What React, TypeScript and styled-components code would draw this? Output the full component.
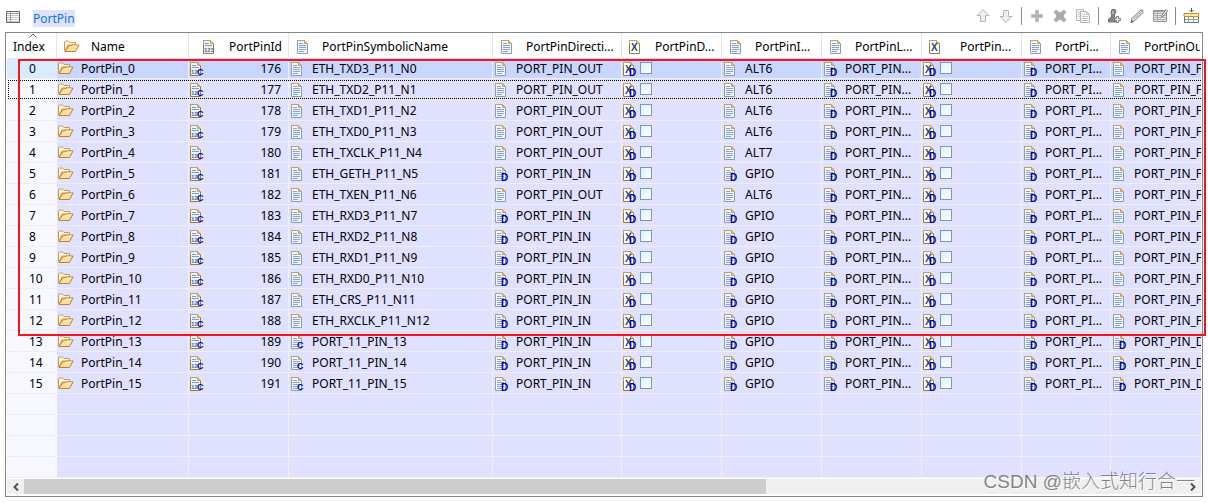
import React from "react";
import styled, { createGlobalStyle, css } from "styled-components";

const GlobalStyle = createGlobalStyle`
  *, *::before, *::after { box-sizing: border-box; }
  body {
    margin: 0;
    background: #fff;
    color: #000;
    font: 12px/16px "Noto Sans", "Noto Sans CJK SC", sans-serif;
  }
`;

const Page = styled.main`
  padding: 0 5px 5px;
`;

const TitleBar = styled.header`
  display: flex;
  align-items: center;
  justify-content: space-between;
  height: 32px;
  padding-right: 4px;
`;

const Title = styled.div`
  display: flex;
  align-items: center;
  gap: 12px;
  padding-top: 4px;
`;

const TitleLink = styled.a`
  padding-top: 1px;
  background: #e0e0ff;
  color: #0a78d6;
  text-decoration: none;
`;

const Toolbar = styled.div`
  display: flex;
  align-items: center;
  gap: 7px;
`;

const ToolButton = styled.button`
  display: block;
  width: 16px;
  height: 16px;
  padding: 0;
  border: 0;
  background: none;
`;

const Separator = styled.span`
  width: 1px;
  height: 18px;
  background: #8c8c8c;
`;

const Frame = styled.section`
  position: relative;
  border: 1px solid #828790;
  padding: 0 1px;
`;

const Viewport = styled.div`
  overflow: hidden;
`;

const Grid = styled.table`
  width: 100%;
  table-layout: fixed;
  border-collapse: separate;
  border-spacing: 0;
`;

const Col = styled.col<{ $width?: number }>`
  ${(p) => p.$width && `width: ${p.$width}px;`}
`;

const HeadCell = styled.th<{ $last?: boolean }>`
  height: 25px;
  padding: 0;
  overflow: hidden;
  border-right: 1px solid ${(p) => (p.$last ? "transparent" : "#e5e5e5")};
  font-weight: 400;
  text-align: left;
  white-space: nowrap;
`;

const HeadContent = styled.div<{ $gap: number; $end?: boolean }>`
  display: flex;
  align-items: center;
  gap: ${(p) => p.$gap}px;
  padding: 1px 6px 0 7px;
  ${(p) => p.$end && "justify-content: flex-end;"}
`;

const IndexHead = styled.div`
  position: relative;
  padding: 3px 4px 0 6px;
`;

const SortMark = styled.svg`
  position: absolute;
  top: -3px;
  left: 22px;
`;

const Row = styled.tr<{ $selected?: boolean; $focused?: boolean }>`
  --index: ${(p) => (p.$selected ? "#d9ebff" : "#f7f7ff")};
  --cell: ${(p) => (p.$selected ? "#c9d6ff" : "#e0e0ff")};
  ${(p) =>
    p.$focused &&
    css`
      position: relative;
      td:first-child::after {
        content: "";
        position: absolute;
        inset: 1px 0 1px 1px;
        border: 1px dotted #000;
        border-right: 0;
        pointer-events: none;
      }
    `}
`;

const Cell = styled.td<{ $last?: boolean }>`
  height: 21px;
  padding: 0 0 0 1px;
  overflow: hidden;
  background: var(--cell);
  border-bottom: 1px solid #efefef;
  border-right: ${(p) => (p.$last ? 0 : 1)}px solid #efefef;
  white-space: nowrap;
`;

const IndexCell = styled(Cell)`
  padding: 2px 0 0 22px;
  background: var(--index);
  border-right-color: var(--index);
`;

const CellContent = styled.div<{ $spread?: boolean; $gap?: number }>`
  display: flex;
  align-items: center;
  gap: ${(p) => p.$gap ?? 6}px;
  ${(p) => p.$spread && "justify-content: space-between; padding-right: 7px;"}
`;

const Label = styled.span`
  padding-top: 2px;
`;

const Glyph = styled.svg`
  display: block;
  flex: none;
  overflow: visible;
`;

const CheckBox = styled.input`
  appearance: none;
  width: 12px;
  height: 12px;
  margin: 0;
  border: 1px solid #8496ad;
  background: linear-gradient(135deg, #d8f2fc, #fff);
`;

const ScrollBar = styled.div`
  display: flex;
  align-items: stretch;
  height: 15px;
  margin: 1px 0 2px;
  background: #efefef;
`;

const ScrollButton = styled.button`
  display: flex;
  align-items: center;
  justify-content: center;
  width: 17px;
  padding: 0;
  border: 0;
  background: none;
`;

const Track = styled.div`
  flex: 1;
`;

const Thumb = styled.div`
  width: 64%;
  height: 100%;
  background: #cdcdcd;
`;

const Highlight = styled.div`
  position: absolute;
  top: 26px;
  left: 12px;
  right: -4px;
  height: 277px;
  border: 2px solid #f5141c;
  pointer-events: none;
`;

const Watermark = styled.div`
  position: absolute;
  right: 7px;
  bottom: 1px;
  color: rgba(100, 100, 105, 0.8);
  font: 19px/26px "Liberation Sans", "Noto Sans CJK SC", sans-serif;
  font-weight: 300;
  text-shadow: 1px 1px 0 rgba(255, 255, 255, 0.8);
  white-space: nowrap;
  pointer-events: none;
`;

type Kind = "doc" | "num" | "bool" | "folder";
type Badge = "C" | "D";

function KindIcon({ kind, badge }: { kind: Kind; badge?: Badge }) {
  if (kind === "folder") {
    return (
      <Glyph width="16" height="16" viewBox="0 0 16 16" aria-hidden="true">
        <path d="M.5 12.500v-8.500l1-1h3l1.500 1.500h5.500v2.500h-7.500L1 13z" fill="#fdf6dc" stroke="#cb9a52" strokeLinejoin="round" />
        <path d="M1 13.500 4.500 8h2.500l1-1h7L11.500 13.500z" fill="#fbdf9a" stroke="#bd7f30" strokeLinejoin="round" />
        <path d="M5.500 9h2l1-1h5" fill="none" stroke="#fff3c8" />
      </Glyph>
    );
  }
  const x = kind === "doc" ? 1 : 0;
  const edge = kind === "doc" ? "#8a9cba" : "#9c7b34";
  return (
    <Glyph width="16" height="16" viewBox="0 0 16 16" aria-hidden="true">
      <path
        d={`M${x + 0.5} 2.500h7l3 3v10h-10z`}
        fill={kind === "num" ? "#eaf2fb" : kind === "doc" ? "#f0f6fd" : "#fbfdff"}
        stroke={edge}
      />
      <path d={`M${x + 0.5} 6v-3.500h7`} fill="none" stroke="#b9a467" />
      <path d={`M${x + 7.5} 2.500v3h3z`} fill="#e6bd62" stroke="#caa552" />
      {kind === "doc" && (
        <path d={`M${x + 2} 5.500h4M${x + 2} 7.500h7M${x + 2} 9.500h7M${x + 2} 11.500h7M${x + 2} 13.500h5`} stroke="#8ba3cb" />
      )}
      {kind === "num" && (
        <>
          <path d="M2 5.500h4M2 7.500h7" stroke="#7f9cc6" />
          <text x="1" y="14" fontFamily="Liberation Sans" fontSize="6" fontWeight="700" fill="#4d6f9f">
            {badge ? "12" : "123"}
          </text>
        </>
      )}
      {kind === "bool" && (
        <text x="2" y="13" fontFamily="Liberation Sans" fontSize="10" fontWeight="700" fill="#24496c">X</text>
      )}
      {badge && (
        <text
          x={kind === "bool" ? 6 : 7}
          y={badge === "D" ? 16 : 15}
          fontFamily="Liberation Sans"
          fontSize={badge === "D" ? 10 : 9}
          fontWeight="700"
          fill="#00009c"
        >
          {badge}
        </text>
      )}
    </Glyph>
  );
}

type ToolName = "up" | "down" | "add" | "remove" | "copy" | "stamp" | "edit" | "editTable" | "insert";

const toolDrawings: Record<ToolName, React.ReactNode> = {
  up: <path d="M8 1.500 14 7.500h-3.500v6h-5v-6H2z" fill="#eeeeea" stroke="#b4b4b0" strokeLinejoin="round" />,
  down: <path d="M8 14.500 14 8.500h-3.500v-6h-5v6H2z" fill="#eeeeea" stroke="#b4b4b0" strokeLinejoin="round" />,
  add: <path d="M6.500 2.500h3v4h4v3h-4v4h-3v-4h-4v-3h4z" fill="#b3b6ad" stroke="#bfc1ba" />,
  remove: <path d="M2 4 4 2l4 3 4-3 2 2-3 4 3 4-2 2-4-3-4 3-2-2 3-4z" fill="#aaa" stroke="#b4b4b4" />,
  copy: (
    <>
      <path d="M1.500 1.500h7v11h-7z" fill="#f6f6f6" stroke="#b9b9b9" />
      <path d="M5.500 3.500h6l3 3v8h-9z" fill="#fafafa" stroke="#b4b4b4" />
      <path d="M11.500 3.500v3h3M7 6.500h3M7 8.500h6M7 10.500h6M7 12.500h6M3 4.500h2M3 6.500h2M3 8.500h2" fill="none" stroke="#c3c3c3" />
    </>
  ),
  stamp: (
    <>
      <path d="M5 3.500 6 1.500h3l1 2L8.500 7v2l1.500 2v3H2.500v-3l3-2V7z" fill="#858585" stroke="#747474" />
      <path d="M6 3h2v3H6z" fill="#b4b4b4" />
      <path d="M10.500 8.500h2v2h2v2h-2v2h-2v-2h-2v-2h2z" fill="#e9e9e9" stroke="#7d7d7d" />
    </>
  ),
  edit: (
    <>
      <path d="M2 14.500 3 10.500 11 2.500l2.500-.500.500 2.500-8 8z" fill="#dcdcdc" stroke="#7b7b7b" />
      <path d="M5 11 12 4" stroke="#b5b5b5" />
      <path d="M1.500 15 2.500 12l2 2z" fill="#666" />
    </>
  ),
  editTable: (
    <>
      <path d="M1.500 2.500h13v11h-13z" fill="#e6e1e8" stroke="#999" />
      <path d="M1 2h14v2H1z" fill="#999" />
      <path d="M2 5.500h12M2 7.500h12M2 9.500h12M2 11.500h12M5.500 4v9" stroke="#b4aeb6" />
      <path d="M9.500 9 10 7l4-5.500 1.500 1.500L11.500 8z" fill="#eee" stroke="#858585" />
    </>
  ),
  insert: (
    <>
      <path d="M1.500 5.500h14v9h-14z" fill="#f8fafc" stroke="#55738f" />
      <path d="M2 8.500h14M2 11.500h14M5.500 9v6M10.500 9v6" stroke="#8ba2b8" />
      <path d="M1 5.500h14.500v3H1z" fill="#ffe9a6" stroke="#d08c12" />
      <path d="M8.500 0v4M6.500 2 8.500 4l2-2" fill="none" stroke="#3d5a78" />
    </>
  ),
};

const toolGroups: { name: ToolName; label: string }[][] = [
  [
    { name: "up", label: "Move up" },
    { name: "down", label: "Move down" },
  ],
  [
    { name: "add", label: "Add" },
    { name: "remove", label: "Remove" },
    { name: "copy", label: "Duplicate" },
  ],
  [
    { name: "stamp", label: "Add reference" },
    { name: "edit", label: "Edit" },
    { name: "editTable", label: "Edit table" },
  ],
  [{ name: "insert", label: "Insert row" }],
];

interface Column {
  title: string;
  kind: Kind;
  width?: number;
  gap?: number;
  end?: boolean;
}

const columns: Column[] = [
  { title: "Name", kind: "folder", width: 132, gap: 11 },
  { title: "PortPinId", kind: "num", width: 100, end: true },
  { title: "PortPinSymbolicName", kind: "doc", width: 204 },
  { title: "PortPinDirecti...", kind: "doc", width: 129 },
  { title: "PortPinD...", kind: "bool", width: 100 },
  { title: "PortPinI...", kind: "doc", width: 100 },
  { title: "PortPinL...", kind: "doc", width: 100 },
  { title: "PortPin...", kind: "bool", width: 100, gap: 15 },
  { title: "PortPi...", kind: "doc", width: 89 },
  { title: "PortPinOutput", kind: "doc" },
];

const symbolicNames = [
  "ETH_TXD3_P11_N0",
  "ETH_TXD2_P11_N1",
  "ETH_TXD1_P11_N2",
  "ETH_TXD0_P11_N3",
  "ETH_TXCLK_P11_N4",
  "ETH_GETH_P11_N5",
  "ETH_TXEN_P11_N6",
  "ETH_RXD3_P11_N7",
  "ETH_RXD2_P11_N8",
  "ETH_RXD1_P11_N9",
  "ETH_RXD0_P11_N10",
  "ETH_CRS_P11_N11",
  "ETH_RXCLK_P11_N12",
  "PORT_11_PIN_13",
  "PORT_11_PIN_14",
  "PORT_11_PIN_15",
];

const pins = symbolicNames.map((symbol, index) => {
  const output = index < 5 || index === 6;
  return {
    index,
    symbol,
    id: 176 + index,
    output,
    mode: output ? (index === 4 ? "ALT7" : "ALT6") : "GPIO",
    custom: index < 13,
  };
});

function ValueCell({ text, badge, last }: { text: string; badge?: Badge; last?: boolean }) {
  return (
    <Cell $last={last}>
      <CellContent>
        <KindIcon kind="doc" badge={badge} />
        <Label>{text}</Label>
      </CellContent>
    </Cell>
  );
}

function FlagCell({ label }: { label: string }) {
  return (
    <Cell>
      <CellContent $gap={1}>
        <KindIcon kind="bool" badge="D" />
        <CheckBox type="checkbox" aria-label={label} />
      </CellContent>
    </Cell>
  );
}

export default function App() {
  return (
    <Page>
      <GlobalStyle />
      <TitleBar>
        <Title>
          <Glyph width="16" height="16" viewBox="0 0 16 16" aria-hidden="true">
            <path d="M1.500 1.500h13v11h-13z" fill="#fff" stroke="#666" />
            <path d="M2 3.500h12" stroke="#999" />
            <path d="M2 5.500h12M2 7.500h12M2 9.500h12M2 11.500h12" stroke="#c4c4c4" />
            <path d="M5.500 2v10" stroke="#999" />
          </Glyph>
          <TitleLink href="#portpin">PortPin</TitleLink>
        </Title>
        <Toolbar role="toolbar" aria-label="Table actions">
          {toolGroups.map((group, i) => (
            <React.Fragment key={i}>
              {i > 0 && <Separator />}
              {group.map((tool) => (
                <ToolButton key={tool.name} type="button" aria-label={tool.label}>
                  <Glyph width="16" height="16" viewBox="0 0 16 16" fill="none">
                    {toolDrawings[tool.name]}
                  </Glyph>
                </ToolButton>
              ))}
            </React.Fragment>
          ))}
        </Toolbar>
      </TitleBar>

      <Frame>
        <Viewport>
          <Grid>
            <colgroup>
              <Col $width={50} />
              {columns.map((c) => (
                <Col key={c.title} $width={c.width} />
              ))}
            </colgroup>
            <thead>
              <tr>
                <HeadCell scope="col" aria-sort="ascending">
                  <IndexHead>
                    Index
                    <SortMark width="8" height="5" viewBox="0 0 8 5" aria-hidden="true">
                      <path d="M.5 4.500 4 1l3.500 3.500" fill="none" stroke="#666" />
                    </SortMark>
                  </IndexHead>
                </HeadCell>
                {columns.map((c, i) => (
                  <HeadCell key={c.title} scope="col" $last={i === columns.length - 1}>
                    <HeadContent $gap={c.gap ?? 10} $end={c.end}>
                      <KindIcon kind={c.kind} />
                      <Label>{c.title}</Label>
                    </HeadContent>
                  </HeadCell>
                ))}
              </tr>
            </thead>
            <tbody>
              {pins.map((pin) => (
                <Row key={pin.index} $selected={pin.index === 0} $focused={pin.index === 1}>
                  <IndexCell>{pin.index}</IndexCell>
                  <Cell>
                    <CellContent $gap={7}>
                      <KindIcon kind="folder" />
                      <Label>PortPin_{pin.index}</Label>
                    </CellContent>
                  </Cell>
                  <Cell>
                    <CellContent $spread>
                      <KindIcon kind="num" badge="C" />
                      <Label>{pin.id}</Label>
                    </CellContent>
                  </Cell>
                  <ValueCell text={pin.symbol} badge={pin.custom ? undefined : "C"} />
                  <ValueCell text={pin.output ? "PORT_PIN_OUT" : "PORT_PIN_IN"} badge={pin.output ? undefined : "D"} />
                  <FlagCell label={`Direction changeable, pin ${pin.index}`} />
                  <ValueCell text={pin.mode} badge={pin.output ? undefined : "D"} />
                  <ValueCell text="PORT_PIN..." badge="D" />
                  <FlagCell label={`Mode changeable, pin ${pin.index}`} />
                  <ValueCell text="PORT_PI..." badge="D" />
                  <ValueCell
                    text={pin.custom ? "PORT_PIN_F" : "PORT_PIN_D"}
                    badge={pin.custom ? undefined : "D"}
                    last
                  />
                </Row>
              ))}
              {[0, 1, 2, 3].map((n) => (
                <Row key={`empty-${n}`}>
                  <IndexCell />
                  {columns.map((c, i) => (
                    <Cell key={c.title} $last={i === columns.length - 1} />
                  ))}
                </Row>
              ))}
            </tbody>
          </Grid>
        </Viewport>
        <ScrollBar>
          <ScrollButton type="button" aria-label="Scroll left">
            <svg width="6" height="8" viewBox="0 0 6 8" aria-hidden="true">
              <path d="M5 .5 1.500 4 5 7.500" fill="none" stroke="#505050" strokeWidth="2" />
            </svg>
          </ScrollButton>
          <Track>
            <Thumb />
          </Track>
          <ScrollButton type="button" aria-label="Scroll right">
            <svg width="6" height="8" viewBox="0 0 6 8" aria-hidden="true">
              <path d="M1 .5 4.500 4 1 7.500" fill="none" stroke="#505050" strokeWidth="2" />
            </svg>
          </ScrollButton>
        </ScrollBar>
        <Highlight />
        <Watermark>CSDN @嵌入式知行合一</Watermark>
      </Frame>
    </Page>
  );
}
